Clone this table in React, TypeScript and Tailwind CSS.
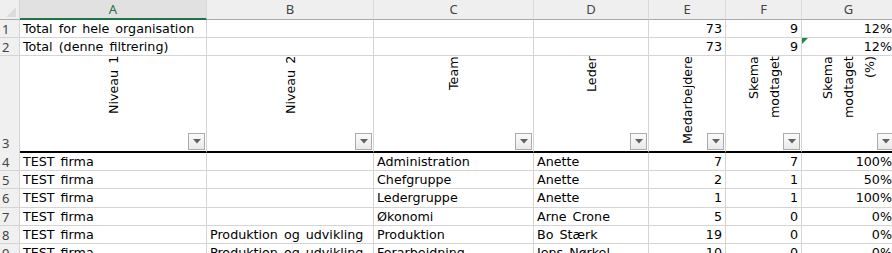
import type { ReactNode } from "react";

type Row = {
  n: number;
  h: string;
  a: string;
  b: string;
  c: string;
  d: string;
  e: number;
  f: number;
  g: string;
};

const rows: Row[] = [
  { n: 4, h: "h-[18px]", a: "TEST firma", b: "", c: "Administration", d: "Anette", e: 7, f: 7, g: "100%" },
  { n: 5, h: "h-[18px]", a: "TEST firma", b: "", c: "Chefgruppe", d: "Anette", e: 2, f: 1, g: "50%" },
  { n: 6, h: "h-[19px]", a: "TEST firma", b: "", c: "Ledergruppe", d: "Anette", e: 1, f: 1, g: "100%" },
  { n: 7, h: "h-[18px]", a: "TEST firma", b: "", c: "Økonomi", d: "Arne Crone", e: 5, f: 0, g: "0%" },
  { n: 8, h: "h-[18px]", a: "TEST firma", b: "Produktion og udvikling", c: "Produktion", d: "Bo Stærk", e: 19, f: 0, g: "0%" },
  { n: 9, h: "h-[18px]", a: "TEST firma", b: "Produktion og udvikling", c: "Forarbejdning", d: "Jens Nørkel", e: 10, f: 0, g: "0%" },
];

const letters = ["A", "B", "C", "D", "E", "F", "G"];

const grid = "grid grid-cols-[20px_187px_167px_160px_115px_77px_76px_94px]";

function RowHead({ n, h }: { n: number | string; h: string }) {
  return (
    <div
      className={`${h} bg-[#f0f0f0] border-r border-b border-[#d4d4d4] pl-[2px] pt-px leading-[16px] text-[13px] text-[#444] font-['Noto_Sans',sans-serif] [word-spacing:0]`}
    >
      {n}
    </div>
  );
}

function Cell({ children, right, h, className = "" }: { children?: ReactNode; right?: boolean; h: string; className?: string }) {
  return (
    <div
      className={`${h} relative flex border-r border-b border-[#d4d4d4] px-[3px] pt-px leading-[16px] whitespace-nowrap overflow-hidden ${
        right ? "justify-end" : ""
      } ${className}`}
    >
      {children}
    </div>
  );
}

function FilterButton() {
  return (
    <div className="absolute right-px bottom-px w-[17px] h-[17px] border border-[#ababab] bg-gradient-to-b from-[#fbfbfb] to-[#e9e9e9] flex items-center justify-center">
      <svg width="8" height="5" viewBox="0 0 8 5">
        <path d="M0 0h8L4 4.5z" fill="#606060" />
      </svg>
    </div>
  );
}

// rotated column titles in row 3, lines read bottom to top
function HeaderCell({ lines }: { lines: string[] }) {
  return (
    <div className="h-[97px] relative flex justify-center border-r border-[#d4d4d4] border-b-2 border-b-black">
      <div className="h-full py-[2px] [writing-mode:vertical-rl] rotate-180 text-right leading-[21px] whitespace-nowrap">
        {lines.map((l) => (
          <div key={l}>{l}</div>
        ))}
      </div>
      <FilterButton />
    </div>
  );
}

export default function App() {
  return (
    <div className="w-[892px] h-[253px] overflow-hidden bg-white text-black text-[12.7px] [word-spacing:2px] font-['DejaVu_Sans',sans-serif]">
      <div className="w-[899px]">
        {/* column letters */}
        <div className={`${grid} h-[20px] font-['Noto_Sans',sans-serif] text-[13px] text-[#444]`}>
          <div className="relative bg-[#efefef] border-r border-b border-[#ababab] border-r-[#d4d4d4]">
            <svg className="absolute right-[3px] bottom-[2px]" width="10" height="10" viewBox="0 0 10 10">
              <path d="M10 0v10H0z" fill="#dcdcdc" />
            </svg>
          </div>
          {letters.map((l, i) => (
            <div
              key={l}
              className={`flex items-center justify-center leading-none border-r border-[#d9d9d9] ${
                i === 0
                  ? "bg-[#e1e1e1] border-b-2 border-b-[#217346] text-[#217346]"
                  : "bg-[#efefef] border-b border-b-[#ababab]"
              }`}
            >
              {l}
            </div>
          ))}
        </div>

        {/* totals */}
        <div className={grid}>
          <RowHead n={1} h="h-[18px]" />
          <Cell h="h-[18px]">Total for hele organisation</Cell>
          <Cell h="h-[18px]" />
          <Cell h="h-[18px]" />
          <Cell h="h-[18px]" />
          <Cell h="h-[18px]" right>73</Cell>
          <Cell h="h-[18px]" right>9</Cell>
          <Cell h="h-[18px]" right>12%</Cell>

          <RowHead n={2} h="h-[18px]" />
          <Cell h="h-[18px]">Total (denne filtrering)</Cell>
          <Cell h="h-[18px]" />
          <Cell h="h-[18px]" />
          <Cell h="h-[18px]" />
          <Cell h="h-[18px]" right>73</Cell>
          <Cell h="h-[18px]" right>9</Cell>
          <Cell h="h-[18px]" right className="overflow-visible">
            <svg className="absolute left-0 top-0" width="6" height="6" viewBox="0 0 6 6">
              <path d="M0 0h6L0 6z" fill="#1e8a3a" />
            </svg>
            12%
          </Cell>
        </div>

        {/* column titles with filters */}
        <div className={grid}>
          <div className="h-[97px] bg-[#f0f0f0] border-r border-[#d4d4d4] flex items-end pl-[2px] pb-[2px] text-[13px] leading-[16px] text-[#444] font-['Noto_Sans',sans-serif]">
            3
          </div>
          <HeaderCell lines={["Niveau 1"]} />
          <HeaderCell lines={["Niveau 2"]} />
          <HeaderCell lines={["Team"]} />
          <HeaderCell lines={["Leder"]} />
          <HeaderCell lines={["Medarbejdere"]} />
          <HeaderCell lines={["Skema", "modtaget"]} />
          <HeaderCell lines={["Skema", "modtaget", "(%)"]} />
        </div>

        {/* data rows */}
        <div className={grid}>
          {rows.map((r) => (
            <div key={r.n} className="contents">
              <RowHead n={r.n} h={r.h} />
              <Cell h={r.h}>{r.a}</Cell>
              <Cell h={r.h}>{r.b}</Cell>
              <Cell h={r.h}>{r.c}</Cell>
              <Cell h={r.h}>{r.d}</Cell>
              <Cell h={r.h} right>{r.e}</Cell>
              <Cell h={r.h} right>{r.f}</Cell>
              <Cell h={r.h} right>{r.g}</Cell>
            </div>
          ))}
        </div>
      </div>
    </div>
  );
}
